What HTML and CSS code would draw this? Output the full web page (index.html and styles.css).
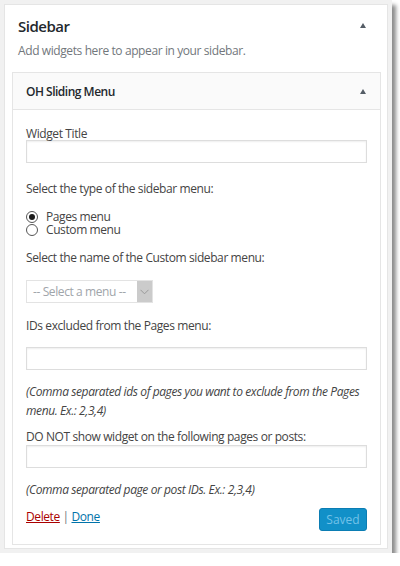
FILE: index.html
```html
<!DOCTYPE html>
<html lang="en">
<head>
<meta charset="utf-8">
<title>Sidebar widget</title>
<link rel="stylesheet" href="styles.css">
</head>
<body>
<div class="frame">
  <div class="panel">
    <div class="panel-head">
      <h2 class="panel-title">Sidebar</h2>
      <span class="toggle"></span>
    </div>
    <p class="panel-desc">Add widgets here to appear in your sidebar.</p>
    <div class="widget">
      <div class="widget-head">
        <h3 class="widget-title">OH Sliding Menu</h3>
        <span class="toggle"></span>
      </div>
      <div class="widget-body">
        <label class="lbl lbl-title">Widget Title</label>
        <input class="field field-title" type="text">
        <p class="lbl lbl-type">Select the type of the sidebar menu:</p>
        <div class="radios">
          <label class="radio"><span class="radio-dot checked"></span>Pages menu</label>
          <label class="radio"><span class="radio-dot"></span>Custom menu</label>
        </div>
        <p class="lbl lbl-name">Select the name of the Custom sidebar menu:</p>
        <div class="select">
          <span class="select-text">-- Select a menu --</span>
          <span class="select-btn"><svg width="9" height="6" viewBox="0 0 9 6"><path d="M0.5 0.8 L4.5 4.8 L8.5 0.8" fill="none" stroke="#9a9a9a" stroke-width="1"/></svg></span>
        </div>
        <p class="lbl lbl-ids">IDs excluded from the Pages menu:</p>
        <input class="field field-ids" type="text">
        <p class="note note-ids">(Comma separated ids of pages you want to exclude from the Pages menu. Ex.: 2,3,4)</p>
        <p class="lbl lbl-hide">DO NOT show widget on the following pages or posts:</p>
        <input class="field field-hide" type="text">
        <p class="note note-hide">(Comma separated page or post IDs. Ex.: 2,3,4)</p>
        <div class="actions">
          <div class="links"><a class="link-delete" href="#">Delete</a> <span class="sep">|</span> <a class="link-done" href="#">Done</a></div>
          <button class="btn-saved" type="button" disabled>Saved</button>
        </div>
      </div>
    </div>
  </div>
</div>
</body>
</html>
```

FILE: styles.css
```css
* { box-sizing: border-box; }

body {
  margin: 0;
  background: #fff;
  font-family: "Open Sans", "Noto Sans", sans-serif;
  font-size: 12px;
  letter-spacing: -0.4px;
  color: #444;
}

.frame {
  width: 392px;
  height: 553px;
  padding: 4px;
  background: #f1f1f1;
  box-shadow: 4px 5px 4px rgba(0, 0, 0, 0.45);
}

.panel {
  height: 545px;
  border: 1px solid #e5e5e5;
  background: #fff;
  padding: 0 6px 0 7px;
}

.panel-head {
  display: flex;
  justify-content: space-between;
  align-items: center;
  padding: 11px 15px 0 6px;
}

.panel-title {
  margin: 0;
  font-size: 15px;
  line-height: 20px;
  font-weight: 600;
  letter-spacing: -0.5px;
  color: #23282d;
}

.toggle {
  width: 0;
  height: 0;
  border-left: 3.5px solid transparent;
  border-right: 3.5px solid transparent;
  border-bottom: 5px solid #555d66;
}

.panel-head .toggle { margin-top: -2px; }

.panel-desc {
  margin: 6px 0 0 6px;
  line-height: 18px;
  color: #72777c;
}

.widget {
  margin-top: 12px;
  border: 1px solid #e5e5e5;
  background: #fff;
}

.widget-head {
  display: flex;
  justify-content: space-between;
  align-items: center;
  height: 37px;
  padding: 1px 14px 0 13px;
  background: #fafafa;
  border-bottom: 1px solid #e5e5e5;
}

.widget-title {
  margin: 0;
  font-size: 12px;
  line-height: 18px;
  font-weight: 600;
  letter-spacing: -0.5px;
  color: #23282d;
}

.widget-body {
  padding: 0 13px 13px 13px;
}

.lbl {
  display: block;
  margin: 0;
  line-height: 18px;
}

.lbl-title { margin-top: 17px; line-height: 14px; }
.lbl-type { margin-top: 17px; }
.lbl-name { margin-top: 13px; }
.lbl-ids { margin-top: 14px; }
.lbl-hide { margin-top: 9px; line-height: 16px; }

.field {
  display: block;
  width: 100%;
  height: 23px;
  margin: 0;
  padding: 0 6px;
  border: 1px solid #ddd;
  background: #fff;
  box-shadow: inset 0 1px 2px rgba(0, 0, 0, 0.07);
  font: inherit;
}

.field-title { margin-top: -1px; }
.field-ids { margin-top: 12px; }
.field-hide { margin-top: 0; }

.radios { margin-top: 12px; }

.radio {
  display: flex;
  align-items: center;
  height: 13px;
  line-height: 13px;
}

.radio-dot {
  position: relative;
  width: 12px;
  height: 12px;
  margin-right: 8px;
  border: 1px solid #555;
  border-radius: 50%;
  background: #fff;
}

.radio-dot.checked::after {
  content: "";
  position: absolute;
  left: 2px;
  top: 2px;
  width: 6px;
  height: 6px;
  border-radius: 50%;
  background: #1b1b1b;
}

.select {
  display: flex;
  width: 127px;
  height: 23px;
  margin-top: 13px;
  border: 1px solid #e3e3e3;
  background: #fff;
}

.select-text {
  flex: 1;
  padding-left: 6px;
  line-height: 21px;
  color: #a0a5aa;
}

.select-btn {
  display: flex;
  align-items: center;
  justify-content: center;
  width: 15px;
  background: #cbcbcb;
}

.note {
  margin: 12px 0 0;
  line-height: 19px;
  font-style: italic;
  color: #444;
}

.note-hide { margin-top: 12px; }

.actions {
  display: flex;
  justify-content: space-between;
  align-items: flex-start;
  margin-top: 9px;
}

.links {
  padding-top: 1px;
  line-height: 15px;
}

.link-delete { color: #a00; }
.link-done { color: #0073aa; }
.sep { color: #72777c; }

.btn-saved {
  width: 48px;
  height: 23px;
  padding: 0;
  border: 1px solid #0b7db3;
  border-radius: 3px;
  background: #1190c8;
  color: #73c2e8;
  font: inherit;
  font-size: 12px;
}
```
